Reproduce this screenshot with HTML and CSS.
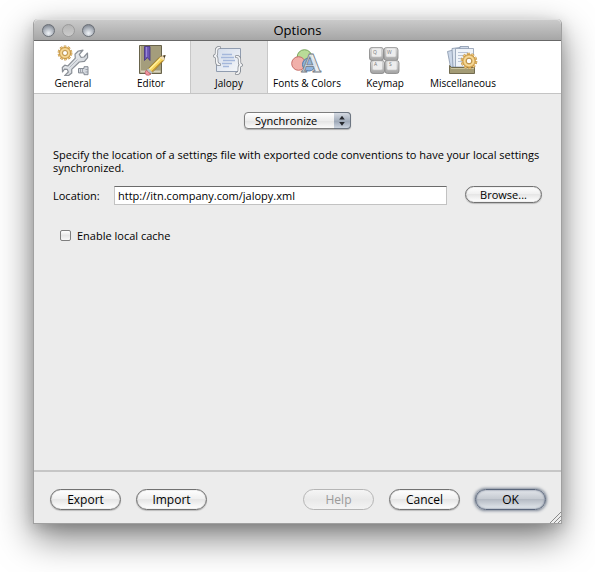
FILE: index.html
```html
<!DOCTYPE html>
<html lang="en">
<head>
  <meta charset="UTF-8" />
  <meta name="viewport" content="width=device-width, initial-scale=1.0"/>
  <title>Options</title>
  <link rel="stylesheet" href="styles.css">
</head>
<body>
  <!-- Shared icon parts -->
  <svg class="defs" aria-hidden="true">
    <defs>
      <linearGradient id="steel" x1="0" y1="0" x2="1" y2="1">
        <stop offset="0" stop-color="#f7f9fb"/>
        <stop offset="1" stop-color="#c3c8cf"/>
      </linearGradient>
      <linearGradient id="paper" x1="0" y1="0" x2="1" y2="1">
        <stop offset="0" stop-color="#d3dceb"/>
        <stop offset="1" stop-color="#f5f7fa"/>
      </linearGradient>
      <linearGradient id="key" x1="0" y1="0" x2="0" y2="1">
        <stop offset="0" stop-color="#dedede"/>
        <stop offset="1" stop-color="#a2a2a2"/>
      </linearGradient>
      <radialGradient id="gold">
        <stop offset="0.3" stop-color="#d9a748"/>
        <stop offset="0.7" stop-color="#f8dda0"/>
        <stop offset="1" stop-color="#dba84d"/>
      </radialGradient>
    </defs>
    <symbol id="gear" viewBox="-9 -9 18 18">
      <circle r="7" fill="none" stroke="#b5873c" stroke-width="2.600" stroke-dasharray="2.8 1.6"/>
      <circle r="7" fill="none" stroke="#f0cd86" stroke-width="1.600" stroke-dasharray="2.4 2" stroke-dashoffset="-0.2"/>
      <circle r="6.4" fill="url(#gold)" stroke="#bc8b3b" stroke-width="0.7"/>
      <circle r="2.8" fill="#fff" stroke="#b58a42" stroke-width="1"/>
    </symbol>
  </svg>

  <main class="window">
    <!-- Title Bar -->
    <header class="title-bar">
      <div class="lights">
        <button class="light" aria-label="Close"></button>
        <button class="light off" aria-label="Minimize" disabled></button>
        <button class="light" aria-label="Zoom"></button>
      </div>
      <h1>Options</h1>
    </header>

    <!-- Categories -->
    <nav class="toolbar">
      <button class="tab">
        <svg class="icon" viewBox="0 0 32 32">
          <path d="M7.500 25.200 10.300 25.400 11.300 28 7.600 31.700 11.600 31.500 14.800 29 14.700 25.400 22.300 18 27.500 17.400 30.600 13.600 30.500 9 27 13 24 13.300 22.300 10.500 26 6.200 21.300 7 18 10.200 18.300 14.200 10.800 22 7.800 21.200 5.300 23.500 5.500 28Z" fill="url(#steel)" stroke="#8b9097" stroke-width="1.200" stroke-linejoin="round"/>
          <path d="M12.500 23.500 20.500 15.500" stroke="#b3b9c1" stroke-width="1"/>
          <use href="#gear" x="0" y="1" width="16" height="16"/>
          <path d="M21.500 24.500h5.500v-1.800h4v8h-4v-1.800h-5.500Z" fill="#d5d9df" stroke="#848a93" stroke-width="1"/>
          <path d="M23.500 24.500v4M25.500 24.500v4M28.500 25.500h2.500M28.500 28h2.500" stroke="#8f959e" stroke-width="0.800"/>
        </svg>
        <span>General</span>
      </button>
      <button class="tab">
        <svg class="icon" viewBox="0 0 32 32">
          <path d="M4.500 1.500h22v28h-22Z" fill="#a49d7c" stroke="#68634b"/>
          <path d="M5.500 27.500h20" stroke="#d8d4be" stroke-width="2"/>
          <path d="M5.500 2v25" stroke="#c5bfa0"/>
          <path d="M9.500 2.500h5.500v14l-2.700-3-2.800 3Z" fill="#6a55b3" stroke="#42337f" stroke-width="0.800"/>
          <path d="M11.500 3v10" stroke="#9a88d8" stroke-width="1.200"/>
          <path d="M12.300 25.500 24.500 13.200 30 11.400 28.600 16.600 16.500 29Z" fill="#f5d55d" stroke="#8c6c24" stroke-width="0.900"/>
          <path d="M14 26 25.500 14.500" stroke="#fff0a4" stroke-width="1.200"/>
          <path d="M16 28 27.500 16.500" stroke="#cf9e32" stroke-width="1"/>
          <path d="M24.500 13.200 30 11.400 28.600 16.600Z" fill="#f2dfb8"/>
          <path d="M28 12 30.600 11 29.600 14Z" fill="#3c3833"/>
          <path d="M12.500 25 17 29.300" stroke="#b9bfc9" stroke-width="2"/>
          <path d="M11.300 26.200 15.800 30.300Q13.500 32 11 30.800 9 28.500 11.300 26.200Z" fill="#f195a0" stroke="#b55a66" stroke-width="0.800"/>
        </svg>
        <span>Editor</span>
      </button>
      <button class="tab selected" aria-current="page">
        <svg class="icon" viewBox="0 0 32 32">
          <path d="M3.500 4.500h24v23h-24Z" fill="url(#paper)" stroke="#909caf"/>
          <path d="M9 10.500h10M8 13.500h13M10 16.500h12M9 19.500h10M10 22.500h6" stroke="#a4b7db" stroke-width="1.300"/>
          <g fill="none" stroke-linecap="round" stroke-linejoin="round">
            <path d="M6.500 3.500Q3.500 3.500 3.500 6.500V9Q3.500 11.500 1.500 12 3.800 12.500 3.800 15V17.500Q3.800 20.500 6.500 20.500" stroke="#83888f" stroke-width="3.200"/>
            <path d="M6.500 3.500Q3.500 3.500 3.500 6.500V9Q3.500 11.500 1.500 12 3.800 12.500 3.800 15V17.500Q3.800 20.500 6.500 20.500" stroke="#f4f5f7" stroke-width="1.700"/>
            <path d="M23.500 12.500Q26.500 12.500 26.500 15.500V18Q26.500 20.500 28.500 21 26.200 21.500 26.200 24V26.500Q26.200 29.500 23.500 29.500" stroke="#83888f" stroke-width="3.200"/>
            <path d="M23.500 12.500Q26.500 12.500 26.500 15.500V18Q26.500 20.500 28.500 21 26.200 21.500 26.200 24V26.500Q26.200 29.500 23.500 29.500" stroke="#f4f5f7" stroke-width="1.700"/>
          </g>
        </svg>
        <span>Jalopy</span>
      </button>
      <button class="tab">
        <svg class="icon" viewBox="0 0 32 32">
          <circle cx="13.500" cy="13" r="7.300" fill="#b9dc98" stroke="#79a65c"/>
          <circle cx="7.500" cy="19.500" r="6.800" fill="#f1b0aa" stroke="#c66e69"/>
          <circle cx="18" cy="20.500" r="6.500" fill="#8fb4df" stroke="#5279a8"/>
          <text class="big-letter" x="20" y="27.500" text-anchor="middle">A</text>
        </svg>
        <span>Fonts &amp; Colors</span>
      </button>
      <button class="tab">
        <svg class="icon" viewBox="0 0 32 32">
          <g fill="url(#key)" stroke="#858585" stroke-width="0.800">
            <rect x="0.500" y="3.500" width="14" height="13" rx="2.500"/>
            <rect x="15" y="3.500" width="14" height="13" rx="2.500"/>
            <rect x="1.500" y="16.500" width="14" height="13" rx="2.500"/>
            <rect x="16" y="16.500" width="14" height="13" rx="2.500"/>
          </g>
          <g fill="#ededed" stroke="#c4c4c4" stroke-width="0.600">
            <rect x="2.500" y="4" width="10" height="9" rx="1.500"/>
            <rect x="17" y="4" width="10" height="9" rx="1.500"/>
            <rect x="3.500" y="17" width="10" height="9" rx="1.500"/>
            <rect x="18" y="17" width="10" height="9" rx="1.500"/>
          </g>
          <g class="key-letters">
            <text x="4" y="10">Q</text>
            <text x="18" y="10">W</text>
            <text x="5" y="22">A</text>
            <text x="20" y="22">S</text>
          </g>
        </svg>
        <span>Keymap</span>
      </button>
      <button class="tab">
        <svg class="icon" viewBox="0 0 32 32">
          <path d="M0.500 7.500 8 5.500 12 23H3.500Z" fill="#cbd7e8" stroke="#8594aa" stroke-width="0.800"/>
          <path d="M5 4.500 13 3.500V23H6Z" fill="#dde5f0" stroke="#8594aa" stroke-width="0.800"/>
          <path d="M13 2.500H21.500V6H13Z" fill="#d3dceb" stroke="#8594aa" stroke-width="0.800"/>
          <path d="M8.500 4.500H26.500V23H8.500Z" fill="#f0f4f9" stroke="#8d9bb0" stroke-width="0.800"/>
          <path d="M11 8.500h10M11 11.500h6M11 14.500h4M11 17.500h4" stroke="#b8c3d5"/>
          <path d="M2.500 21.500 4.500 23.500H27.500V29.500H2.500Z" fill="#a39b75" stroke="#686144" stroke-width="0.900"/>
          <path d="M4 24.500h23" stroke="#cbc49f"/>
          <use href="#gear" x="13" y="8" width="18" height="18"/>
        </svg>
        <span>Miscellaneous</span>
      </button>
    </nav>

    <!-- Settings -->
    <section class="panel">
      <div class="mode">
        <select aria-label="Mode">
          <option>Synchronize</option>
        </select>
        <svg class="mode-arrows" viewBox="0 0 17 16" aria-hidden="true">
          <path d="M5.500 7 8.500 3 11.500 7ZM5.500 9.500 8.500 13.500 11.500 9.500Z" fill="#26292e"/>
        </svg>
      </div>
      <p class="hint">Specify the location of a settings file with exported code conventions to have your local settings synchronized.</p>
      <div class="location-row">
        <label for="location">Location:</label>
        <input type="text" id="location" value="http://itn.company.com/jalopy.xml" />
        <button class="btn small">Browse...</button>
      </div>
      <div class="cache-row">
        <input type="checkbox" id="cache" />
        <label for="cache">Enable local cache</label>
      </div>
    </section>

    <!-- Footer -->
    <footer class="actions">
      <button class="btn">Export</button>
      <button class="btn">Import</button>
      <button class="btn push" disabled>Help</button>
      <button class="btn">Cancel</button>
      <button class="btn default">OK</button>
    </footer>
    <svg class="grip" viewBox="0 0 12 12" aria-hidden="true">
      <path d="M1 12 12 1M5 12 12 5M9 12 12 9" stroke="#8a8a8a"/>
    </svg>
  </main>
</body>
</html>
```
FILE: styles.css
```css
* {
  box-sizing: border-box;
}

body {
  margin: 0;
  padding: 19px 33px 48px;
  background-color: #fff;
  color: #000;
  font-family: "Open Sans", "Liberation Sans", sans-serif;
  font-size: 11px;
  line-height: 13px;
}

button,
input,
select {
  font: inherit;
  color: inherit;
}

.defs {
  position: absolute;
  width: 0;
  height: 0;
}

.window {
  position: relative;
  display: flex;
  flex-direction: column;
  min-height: calc(100vh - 67px);
  border: 1px solid #a0a0a0;
  border-top: none;
  border-radius: 5px 5px 0 0;
  background-color: #ececec;
  box-shadow: 0 14px 36px rgba(0, 0, 0, 0.5), 0 4px 14px rgba(0, 0, 0, 0.15);
}

/* Title bar */
.title-bar {
  display: grid;
  grid-template-columns: 1fr auto 1fr;
  align-items: center;
  height: 22px;
  padding: 0 8px;
  border-top: 1px solid #dedede;
  border-bottom: 1px solid #686868;
  border-radius: 5px 5px 0 0;
  background: linear-gradient(#cacaca, #a6a6a6);
}

.title-bar h1 {
  margin: 0;
  font-size: 13px;
  font-weight: normal;
  line-height: 20px;
}

.lights {
  display: flex;
  gap: 7px;
}

.light {
  width: 13px;
  height: 13px;
  padding: 0;
  border: 1px solid #6a6f76;
  border-radius: 50%;
  background: radial-gradient(circle at 50% 75%, #f0f4f8, #a9afb8 55%, #6c737d);
}

.light.off {
  border-color: #9a9a9a;
  background: linear-gradient(#b4b4b4, #cccccc);
}

/* Toolbar */
.toolbar {
  display: flex;
  height: 53px;
  border-bottom: 1px solid #c4c4c4;
  background-color: #fff;
}

.tab {
  display: flex;
  flex-direction: column;
  align-items: center;
  gap: 1px;
  width: 78px;
  padding: 3px 0 0;
  border: none;
  background: none;
  font-size: 10px;
  white-space: nowrap;
}

.tab.selected {
  border: solid #c8c8c8;
  border-width: 0 1px;
  background-color: #e3e3e3;
}

.icon {
  width: 32px;
  height: 32px;
}

.big-letter {
  fill: #e9edf1;
  fill-opacity: 0.9;
  stroke: #747b84;
  stroke-width: 0.8px;
  font-family: "Liberation Serif", serif;
  font-size: 28px;
  font-weight: bold;
}

.key-letters {
  fill: #777;
  font-size: 5px;
}

/* Settings panel */
.panel {
  flex: 1;
  padding: 18px 19px;
}

.mode {
  position: relative;
  width: 107px;
  margin: 0 auto 19px;
}

.mode select {
  display: block;
  width: 100%;
  height: 17px;
  padding: 0 0 0 10px;
  border: 1px solid #7e7e7e;
  border-radius: 4px;
  background: linear-gradient(#fff, #ededed 50%, #e2e2e2 51%, #fafafa);
  box-shadow: 0 1px 1px rgba(0, 0, 0, 0.25);
  line-height: 15px;
  appearance: none;
}

.mode-arrows {
  position: absolute;
  top: 0;
  right: 0;
  width: 17px;
  height: 17px;
  border: 1px solid #6d7682;
  border-left: none;
  border-radius: 0 4px 4px 0;
  background: linear-gradient(#d5dae2, #a5afbd 50%, #98a3b3 51%, #ccd4df);
  pointer-events: none;
}

.hint {
  margin: 0 0 12px;
}

.location-row {
  display: flex;
  align-items: flex-start;
}

.location-row label {
  width: 61px;
  line-height: 19px;
}

.location-row input {
  flex: 1;
  min-width: 0;
  height: 19px;
  margin-right: 18px;
  padding: 0 3px;
  border: 1px solid #c2c2c2;
  border-top-color: #6b6b6b;
  background-color: #fff;
}

.cache-row {
  display: flex;
  align-items: center;
  gap: 6px;
  margin-top: 24px;
  padding-left: 7px;
}

.cache-row input {
  width: 11px;
  height: 11px;
  margin: 0;
  border: 1px solid #7e7e7e;
  border-radius: 2px;
  background: linear-gradient(#fff, #e6e6e6 50%, #f8f8f8);
  appearance: none;
}

.cache-row input:checked {
  background: #5f6f88;
}

/* Buttons */
.btn {
  width: 71px;
  height: 21px;
  padding: 0;
  border: 1px solid #717171;
  border-radius: 11px;
  background: linear-gradient(#fff, #f0f0f0 45%, #e6e6e6 50%, #fff);
  box-shadow: inset 0 0 1px #777, 0 1px 1px rgba(0, 0, 0, 0.2);
  font-size: 12px;
}

.btn.small {
  width: 77px;
  height: 17px;
  font-size: 11px;
  line-height: 13px;
}

.btn:disabled {
  border-color: #b5b5b5;
  background: linear-gradient(#f5f5f5, #e9e9e9 50%, #f3f3f3);
  box-shadow: none;
  color: #9a9a9a;
}

.btn.default {
  border-color: #59657a;
  background: linear-gradient(#e2e5ea, #c6cbd2 45%, #b5bbc4 50%, #e4e9ee);
  box-shadow: inset 0 0 2px #59657a, 0 0 3px 1px #7d8796;
}

.actions {
  display: flex;
  gap: 15px;
  padding: 17px 15px 13px 16px;
  border-top: 2px solid #c6c6c6;
}

.push {
  margin-left: auto;
}

.grip {
  position: absolute;
  right: 0;
  bottom: 0;
  width: 12px;
  height: 12px;
}
```
